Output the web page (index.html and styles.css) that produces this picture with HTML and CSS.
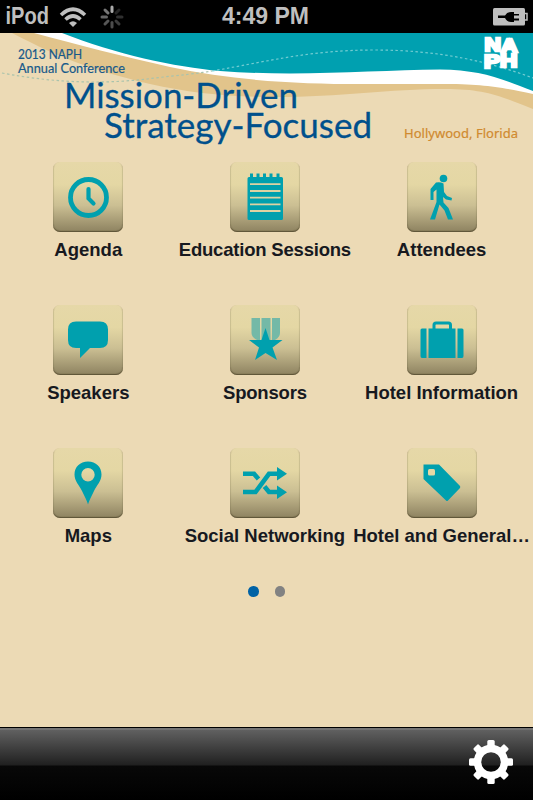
FILE: index.html
```html
<!DOCTYPE html>
<html lang="en">
<head>
    <meta charset="UTF-8">
    <meta name="viewport" content="width=device-width, initial-scale=1.0">
    <title>2013 NAPH Annual Conference</title>
    <link rel="stylesheet" href="styles.css">
</head>
<body>
    <!-- Status bar -->
    <div class="status-bar">
        <div class="status-left">
            <svg class="carrier" width="46" height="33" viewBox="0 0 46 33"><text x="0.500" y="23.500" textLength="43.500" lengthAdjust="spacingAndGlyphs">iPod</text></svg>
            <svg class="wifi" width="28" height="22" viewBox="0 0 28 22">
                <path d="M2 9Q14-2.500 26 9M6.500 13.500Q14 6.500 21.500 13.500" fill="none" stroke="#bfbfbf" stroke-width="3.600"/>
                <path d="M10 17Q14 13.500 18 17L14 21Z" fill="#bfbfbf"/>
            </svg>
            <svg class="spinner" width="24" height="24" viewBox="-12 -12 24 24" stroke-width="3" stroke-linecap="round">
                <path d="M0-5.500V-10" stroke="#aaa"/>
                <path d="M4-4L7-7" stroke="#262626"/>
                <path d="M5.500 0H10" stroke="#303030"/>
                <path d="M4 4L7 7" stroke="#3c3c3c"/>
                <path d="M0 5.500V10" stroke="#4c4c4c"/>
                <path d="M-4 4L-7 7" stroke="#565656"/>
                <path d="M-5.500 0H-10" stroke="#666"/>
                <path d="M-4-4L-7-7" stroke="#777"/>
            </svg>
        </div>
        <svg class="time" width="90" height="33" viewBox="0 0 90 33"><text x="1" y="23.500" textLength="87" lengthAdjust="spacingAndGlyphs">4:49 PM</text></svg>
        <svg class="battery" width="36" height="18" viewBox="0 0 36 18">
            <rect x="0" y="0" width="32" height="17.500" rx="1.500" fill="#bfbfbf"/>
            <path d="M32 5.500H34V12H32" fill="none" stroke="#bfbfbf" stroke-width="1.500"/>
            <path d="M5 7.500H12Q14 4 18 4H21V6H26V7.500H21V10.500H26V12.500H21V14H18Q14 14 12 10H5Z" fill="#000"/>
        </svg>
    </div>

    <!-- Conference banner -->
    <svg class="banner" width="533" height="129" viewBox="0 33 533 129">
        <path fill="#e2c48b" d="M12 33C62 59 92 70 150 84C190 93 230 97 275 97C340 97 390 89 445 89C485 89 500 96 533 109V33Z"/>
        <path fill="#fff" d="M34 33C75 44 125 57 170 67C235 81 300 84 360 84H440C485 84 500 87 533 94V33Z"/>
        <path fill="#00a0b0" d="M62 33C115 54 175 67 220 71C300 77 375 70 440 69.500C480 70 500 78 533 91V33Z"/>
        <path class="dots" stroke="#a9c3ac" d="M2 73C60 84 110 84 155 78C180 75 195 74 212 71"/>
        <path class="dots" stroke="#72ccd2" d="M212 71C270 61 310 50 375 50C440 50 490 62 533 78"/>
        <text class="conf" x="18" y="58.500" textLength="64" lengthAdjust="spacingAndGlyphs">2013 NAPH</text>
        <text class="conf" x="18" y="73" textLength="107" lengthAdjust="spacingAndGlyphs">Annual Conference</text>
        <text class="headline" x="64" y="107.500" textLength="234" lengthAdjust="spacingAndGlyphs">Mission-Driven</text>
        <text class="headline" x="104" y="138" textLength="268" lengthAdjust="spacingAndGlyphs">Strategy-Focused</text>
        <text class="place" x="404" y="138" textLength="114" lengthAdjust="spacing">Hollywood, Florida</text>
        <g class="logo">
            <text x="484.500" y="50.500" textLength="33" lengthAdjust="spacingAndGlyphs">N<tspan dy="1.500">A</tspan></text>
            <text x="484" y="67.500" textLength="33.500" lengthAdjust="spacingAndGlyphs">P<tspan dy="-0.500">H</tspan></text>
        </g>
    </svg>

    <!-- Menu -->
    <div class="menu">
        <div class="item">
            <div class="tile">
                <svg viewBox="0 0 70 70">
                    <circle cx="35.500" cy="35.500" r="18" fill="none" stroke="#00a0ae" stroke-width="4.800"/>
                    <path d="M35.500 27V36.500L40.500 41.500" fill="none" stroke="#00a0ae" stroke-width="4.200" stroke-linecap="round"/>
                </svg>
            </div>
            <span class="label">Agenda</span>
        </div>
        <div class="item">
            <div class="tile">
                <svg viewBox="0 0 70 70">
                    <path fill="#00a0ae" d="M19 15H20V11.500H23V15H26.500V11.500H29.500V15H33V11.500H36V15H39.500V11.500H42.500V15H46.500V11.500H49.500V15H51.500Q53 15 53 16.500V56.500Q53 58 51.500 58H19Q17.500 58 17.500 56.500V16.500Q17.500 15 19 15Z"/>
                    <path d="M20 22.200H50.500M20 29H50.500M20 35.600H50.500M20 42.300H50.500M20 49H50.500" stroke="#ddd2a2" stroke-width="1.800"/>
                </svg>
            </div>
            <span class="label tight">Education Sessions</span>
        </div>
        <div class="item">
            <div class="tile">
                <svg viewBox="0 0 70 70" fill="#00a0ae">
                    <circle cx="36.500" cy="16.500" r="3.800"/>
                    <path d="M29 20.500Q33 19.500 36.500 21.500L37 30L40 34L45 36L44.500 38.500L39 37.500L36 35L36.500 40.500L41.500 46L46 57.500H41L37.500 48.500L32.500 42.500L28 57.500H23L26 49.500L29.500 40V27.500L26.500 30V38H23.500V27Z"/>
                </svg>
            </div>
            <span class="label">Attendees</span>
        </div>
        <div class="item">
            <div class="tile">
                <svg viewBox="0 0 70 70">
                    <path fill="#00a0ae" d="M23 16.500H47Q55 16.500 55 24.500V35Q55 43 47 43H37L27 53V43H23Q15 43 15 35V24.500Q15 16.500 23 16.500Z"/>
                </svg>
            </div>
            <span class="label">Speakers</span>
        </div>
        <div class="item">
            <div class="tile">
                <svg viewBox="0 0 70 70">
                    <path fill="#74b9a7" d="M21.500 13H30V35H27Q21.500 32 21.500 28ZM31.500 13H40.500V35H31.500ZM42 13H50V28Q50 32 45 35H42Z"/>
                    <path fill="#00a0ae" d="M35.500 23L39.500 35H52.500L42.500 42.500L47 55L35.500 48L25 55L29 42.500L19 35H31.500Z"/>
                </svg>
            </div>
            <span class="label tight">Sponsors</span>
        </div>
        <div class="item">
            <div class="tile">
                <svg viewBox="0 0 70 70">
                    <path d="M27 24V20Q27 18 29 18H41.500Q43.500 18 43.500 20V24" fill="none" stroke="#00a0ae" stroke-width="3"/>
                    <path fill="#00a0ae" d="M15 23.500H19.500V53H15Q13.500 53 13.500 51V25Q13.500 23.500 15 23.500ZM21.500 23.500H48.500V53H21.500ZM50.500 23.500H55Q56.500 23.500 56.500 25V51Q56.500 53 55 53H50.500Z"/>
                </svg>
            </div>
            <span class="label">Hotel Information</span>
        </div>
        <div class="item">
            <div class="tile">
                <svg viewBox="0 0 70 70">
                    <path fill="#00a0ae" fill-rule="evenodd" d="M35 13.500C27 13.500 21.500 19 21.500 26.500C21.500 33 26 37 29 43C32 49 34 53 35 56.500C36 53 38 49 41 43C44 37 48.500 33 48.500 26.500C48.500 19 43 13.500 35 13.500ZM35 20A6.700 6.700 0 1 1 35 33.400A6.700 6.700 0 1 1 35 20Z"/>
                </svg>
            </div>
            <span class="label">Maps</span>
        </div>
        <div class="item">
            <div class="tile">
                <svg viewBox="0 0 70 70">
                    <path d="M13 25.800H24L28.500 31M13 44H25.500L39 25.800H48M34.500 38.500L39 44H48" fill="none" stroke="#00a0ae" stroke-width="4.600"/>
                    <path fill="#00a0ae" d="M47 19L57 25.800L47 32.500ZM47 37.500L57 44.300L47 51Z"/>
                </svg>
            </div>
            <span class="label">Social Networking</span>
        </div>
        <div class="item">
            <div class="tile">
                <svg viewBox="0 0 70 70">
                    <path fill="#00a0ae" d="M16.500 16.500H32L53 38Q53.500 39 53 40L41 52.500Q40 53.500 39 52.500L16.500 31Z"/>
                    <rect x="21" y="21" width="7" height="6.500" rx="1.500" fill="#e5d8a5"/>
                </svg>
            </div>
            <span class="label">Hotel and General…</span>
        </div>
    </div>

    <!-- Page dots -->
    <div class="pager">
        <span class="dot active"></span>
        <span class="dot"></span>
    </div>

    <!-- Toolbar -->
    <div class="toolbar">
        <svg class="gear" width="44" height="46" viewBox="-22 -23 44 46">
            <circle r="13.500" fill="none" stroke="#fff" stroke-width="7.500"/>
            <g fill="#fff">
                <rect id="tooth" x="-3.700" y="-22" width="7.400" height="8" rx="1.500"/>
                <use href="#tooth" transform="rotate(45)"/>
                <use href="#tooth" transform="rotate(90)"/>
                <use href="#tooth" transform="rotate(135)"/>
                <use href="#tooth" transform="rotate(180)"/>
                <use href="#tooth" transform="rotate(225)"/>
                <use href="#tooth" transform="rotate(270)"/>
                <use href="#tooth" transform="rotate(315)"/>
            </g>
        </svg>
    </div>
</body>
</html>
```

FILE: styles.css
```css
body {
    margin: 0;
    height: 800px;
    display: flex;
    flex-direction: column;
    overflow: hidden;
    background-color: #ecdab5;
    font-family: "Liberation Sans", Arial, sans-serif;
}
svg {
    display: block;
}
.status-bar {
    height: 33px;
    flex: none;
    display: grid;
    grid-template-columns: 1fr 90px 1fr;
    align-items: center;
    background-color: #000;
}
.status-bar text {
    font-size: 23px;
    font-weight: bold;
    fill: #bfbfbf;
}
.status-left {
    display: flex;
    align-items: center;
    padding-left: 5px;
}
.carrier {
    overflow: visible;
}
.wifi {
    margin-left: 8px;
}
.spinner {
    margin-left: 13px;
}
.time {
    margin-left: -1px;
}
.battery {
    justify-self: end;
    margin-right: 4px;
}
.banner {
    flex: none;
}
.dots {
    fill: none;
    stroke-width: 1.2;
    stroke-dasharray: 2.5 2.5;
}
.conf {
    font-family: Lato, sans-serif;
    font-size: 13.5px;
    fill: #17598a;
    stroke: #17598a;
    stroke-width: 0.2;
}
.headline {
    font-family: Lato, sans-serif;
    font-size: 34.5px;
    fill: #00508c;
    stroke: #00508c;
    stroke-width: 0.3;
}
.place {
    font-family: "Noto Sans", sans-serif;
    font-size: 13px;
    fill: #d08a30;
    stroke: #d08a30;
    stroke-width: 0.2;
}
.logo text {
    font-size: 18.5px;
    font-weight: bold;
    fill: #fff;
    stroke: #fff;
    stroke-width: 2.4;
}
.menu {
    width: 530px;
    flex: none;
    display: grid;
    grid-template-columns: repeat(3, 1fr);
    grid-auto-rows: 143px;
}
.item {
    display: flex;
    flex-direction: column;
    align-items: center;
}
.tile {
    width: 70px;
    height: 70px;
    border-radius: 7px;
    background: linear-gradient(#e6d8a8 0%, #e4d7a4 32%, #cbbf93 62%, #8d8260 100%);
    box-shadow: inset 0 -1px 1px rgba(70, 60, 35, 0.6), inset 1px -1px 1px rgba(90, 80, 50, 0.12), inset -1px -1px 1px rgba(90, 80, 50, 0.12);
}
.label {
    margin-top: 7px;
    font-size: 18.5px;
    line-height: 22px;
    font-weight: bold;
    color: #17191f;
    white-space: nowrap;
}
.label.tight {
    letter-spacing: -0.2px;
}
.pager {
    display: flex;
    justify-content: center;
    gap: 16px;
    margin-top: -5px;
}
.dot {
    width: 10.5px;
    height: 10.5px;
    border-radius: 50%;
    background-color: #828282;
}
.dot.active {
    background-color: #0062a5;
}
.toolbar {
    height: 72px;
    margin-top: auto;
    flex: none;
    display: flex;
    justify-content: flex-end;
    align-items: center;
    border-top: 1px solid #000;
    box-shadow: inset 0 2px #737373;
    background: linear-gradient(#646464 0, #202020 37px, #080808 38px, #000 100%);
}
.gear {
    margin-right: 20px;
    margin-top: -5px;
}
```
